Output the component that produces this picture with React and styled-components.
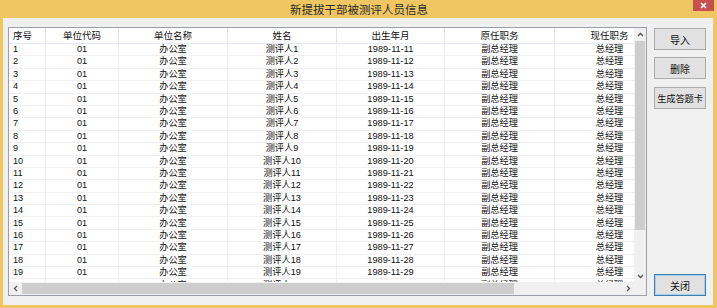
import React from 'react';
import styled, { createGlobalStyle } from 'styled-components';

const GlobalStyle = createGlobalStyle`
  html, body {
    margin: 0;
    padding: 0;
    background: #f0c663;
  }
  body {
    font-family: "Liberation Sans", "Noto Sans CJK SC", sans-serif;
  }
`;

const columns = [
  { key: 'no', title: '序号', width: 37, align: 'left' },
  { key: 'code', title: '单位代码', width: 73 },
  { key: 'unit', title: '单位名称', width: 109 },
  { key: 'name', title: '姓名', width: 109 },
  { key: 'birth', title: '出生年月', width: 108 },
  { key: 'old', title: '原任职务', width: 110 },
  { key: 'now', title: '现任职务', width: 110 },
];

const rows = Array.from({ length: 21 }, (_, i) => ({
  no: String(i + 1),
  code: '01',
  unit: '办公室',
  name: '测评人' + (i + 1),
  birth: '1989-11-' + (11 + i),
  old: '副总经理',
  now: '总经理',
}));

const Window = styled.div`
  width: 717px;
  height: 308px;
  box-sizing: border-box;
  display: flex;
  flex-direction: column;
  background: #f0c663;
  padding: 0 4px 3px 3px;
`;

const TitleBar = styled.div`
  position: relative;
  height: 18px;
  flex: none;
  display: flex;
  align-items: center;
  justify-content: center;
  font-family: "Noto Sans CJK SC", sans-serif;
  font-size: 11.5px;
  color: #2b2b2b;
  padding-left: 2px;
`;

const CloseBox = styled.div`
  position: absolute;
  top: 0;
  right: -1px;
  width: 21px;
  height: 11px;
  background: #c7504f;
  display: flex;
  align-items: center;
  justify-content: center;
`;

const Client = styled.div`
  flex: 1;
  background: #f0f0f0;
  display: flex;
  gap: 7px;
  padding: 9px 7px 9px 5px;
  min-height: 0;
`;

const Grid = styled.div`
  width: 639px;
  flex: none;
  border: 1px solid #9a9ea6;
  background: #fff;
  display: grid;
  grid-template-columns: 1fr 12px;
  grid-template-rows: 1fr 13px;
  overflow: hidden;
  box-sizing: border-box;
`;

const Viewport = styled.div`
  overflow: hidden;
  position: relative;
`;

const Table = styled.div`
  width: max-content;
`;

const Row = styled.div`
  display: flex;
  height: ${p => (p.$head ? '16px' : '12.4px')};
  border-bottom: 1px solid ${p => (p.$head ? '#e3e8f0' : '#efefef')};
  box-sizing: border-box;
`;

const Cell = styled.div`
  width: ${p => p.$w}px;
  flex: none;
  box-sizing: border-box;
  border-right: 1px solid ${p => (p.$head ? '#e3e3e3' : '#f0f0f0')};
  display: flex;
  align-items: center;
  justify-content: ${p => (p.$align === 'left' ? 'flex-start' : 'center')};
  padding-left: ${p => (p.$align === 'left' ? '4px' : '0')};
  font-size: ${p => (p.$head ? '9.5px' : '9.2px')};
  color: #111;
  white-space: nowrap;
  line-height: 1;
`;

const VScroll = styled.div`
  background: #f0f0f0;
  display: flex;
  flex-direction: column;
`;

const HScroll = styled.div`
  background: #f0f0f0;
  display: flex;
  align-items: stretch;
`;

const Corner = styled.div`
  background: #f0f0f0;
`;

const Arrow = styled.div`
  flex: none;
  width: 12px;
  height: ${p => (p.$h ? '13px' : '12px')};
  display: flex;
  align-items: center;
  justify-content: center;
`;

const Track = styled.div`
  flex: 1;
  display: flex;
  flex-direction: ${p => (p.$vertical ? 'column' : 'row')};
  padding: ${p => (p.$vertical ? '1px 0' : '0 1px')};
`;

const Thumb = styled.div`
  background: #cdcdcd;
  ${p => (p.$vertical ? 'height: 189px; margin: 0 1px;' : 'width: 492px; margin: 1px 0;')}
`;

const Side = styled.div`
  flex: 1;
  display: flex;
  flex-direction: column;
  padding-top: 1px;
`;

const Button = styled.button`
  height: 22px;
  width: 52px;
  margin-bottom: ${p => p.$gap || 0}px;
  padding: 0;
  background: #e1e1e1;
  border: 1px solid ${p => (p.$focus ? '#3c7fb1' : '#adadad')};
  box-shadow: ${p => (p.$focus ? 'inset 0 0 0 1px #a6cff0' : 'none')};
  font-family: "Noto Sans CJK SC", sans-serif;
  font-size: ${p => (p.$small ? '9.3px' : '10px')};
  letter-spacing: ${p => (p.$small ? '-0.2px' : '0')};
  color: #111;
  white-space: nowrap;
  overflow: hidden;
  margin-top: ${p => (p.$bottom ? 'auto' : '0')};
`;

const Chevron = ({ dir }) => {
  const paths = {
    up: 'M2 6 L4.5 3.5 L7 6',
    down: 'M2 3 L4.5 5.5 L7 3',
    left: 'M6 2 L3.5 4.5 L6 7',
    right: 'M3 2 L5.5 4.5 L3 7',
  };
  return (
    <svg width="9" height="9" viewBox="0 0 9 9">
      <path d={paths[dir]} fill="none" stroke="#555" strokeWidth="1.3" />
    </svg>
  );
};

const App = () => {
  return (
    <Window>
      <GlobalStyle />
      <TitleBar>
        新提拔干部被测评人员信息
        <CloseBox>
          <svg width="7" height="7" viewBox="0 0 7 7">
            <path d="M1 1 L6 6 M6 1 L1 6" stroke="#fff" strokeWidth="1.6" />
          </svg>
        </CloseBox>
      </TitleBar>
      <Client>
        <Grid>
          <Viewport>
            <Table>
              <Row $head>
                {columns.map(c => (
                  <Cell key={c.key} $w={c.width} $align={c.align} $head>{c.title}</Cell>
                ))}
              </Row>
              {rows.map(r => (
                <Row key={r.no}>
                  {columns.map(c => (
                    <Cell key={c.key} $w={c.width} $align={c.align}>{r[c.key]}</Cell>
                  ))}
                </Row>
              ))}
            </Table>
          </Viewport>
          <VScroll>
            <Arrow><Chevron dir="up" /></Arrow>
            <Track $vertical><Thumb $vertical /></Track>
            <Arrow><Chevron dir="down" /></Arrow>
          </VScroll>
          <HScroll>
            <Arrow $h><Chevron dir="left" /></Arrow>
            <Track><Thumb /></Track>
            <Arrow $h><Chevron dir="right" /></Arrow>
          </HScroll>
          <Corner />
        </Grid>
        <Side>
          <Button $gap={7}>导入</Button>
          <Button $gap={8}>删除</Button>
          <Button $small>生成答题卡</Button>
          <Button $bottom $focus>关闭</Button>
        </Side>
      </Client>
    </Window>
  );
};

export default App;
